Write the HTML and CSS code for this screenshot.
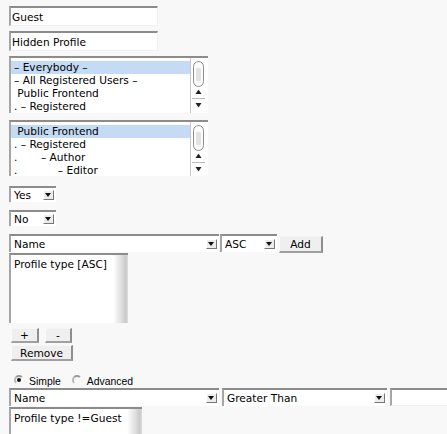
FILE: index.html
```html
<!DOCTYPE html>
<html lang="en">
<head>
    <meta charset="UTF-8">
    <title>Profile</title>
    <link rel="stylesheet" href="styles.css">
</head>
<body>
    <div class="form">
        <input class="field" type="text" value="Guest">
        <input class="field field-two" type="text" value="Hidden Profile">

        <div class="listbox lb-one">
            <div class="opts">
                <div class="opt sel">– Everybody –</div>
                <div class="opt">– All Registered Users –</div>
                <div class="opt">&nbsp;Public Frontend</div>
                <div class="opt">. – Registered</div>
            </div>
            <div class="vscroll">
                <svg width="14" height="52" viewBox="0 0 14 52">
                    <rect x="2.5" y="2.5" width="10" height="25" rx="5" fill="#fbfbfb" stroke="#8e8e8e"/>
                    <path d="M5 10 Q7.5 7 10 10 L10 21 Q7.5 24 5 21 Z" fill="#e2e2e2"/>
                    <path d="M7.5 30.5 L10.5 35 L4.5 35 Z" fill="#222"/>
                    <line x1="1" y1="39.5" x2="14" y2="39.5" stroke="#bbb"/>
                    <path d="M4.5 44 L10.5 44 L7.5 48.5 Z" fill="#222"/>
                </svg>
            </div>
        </div>

        <div class="listbox lb-two">
            <div class="opts">
                <div class="opt sel">&nbsp;Public Frontend</div>
                <div class="opt">. – Registered</div>
                <div class="opt">.&nbsp;&nbsp;&nbsp;&nbsp;&nbsp;&nbsp; – Author</div>
                <div class="opt">.&nbsp;&nbsp;&nbsp;&nbsp;&nbsp;&nbsp;&nbsp;&nbsp;&nbsp;&nbsp;&nbsp; – Editor</div>
            </div>
            <div class="vscroll">
                <svg width="14" height="52" viewBox="0 0 14 52">
                    <rect x="2.5" y="2.5" width="10" height="25" rx="5" fill="#fbfbfb" stroke="#8e8e8e"/>
                    <path d="M5 10 Q7.5 7 10 10 L10 21 Q7.5 24 5 21 Z" fill="#e2e2e2"/>
                    <path d="M7.5 30.5 L10.5 35 L4.5 35 Z" fill="#222"/>
                    <line x1="1" y1="39.5" x2="14" y2="39.5" stroke="#bbb"/>
                    <path d="M4.5 44 L10.5 44 L7.5 48.5 Z" fill="#222"/>
                </svg>
            </div>
        </div>

        <div class="dropdown small yes"><span class="val">Yes</span><span class="arrow"></span></div>
        <div class="dropdown small no"><span class="val">No</span><span class="arrow"></span></div>

        <div class="row sort-row">
            <div class="dropdown name"><span class="val">Name</span><span class="arrow"></span></div>
            <div class="dropdown asc"><span class="val">ASC</span><span class="arrow"></span></div>
            <button class="btn add">Add</button>
        </div>
        <div class="box box-one">
            <div class="box-text">Profile type [ASC]</div>
            <div class="shade"></div>
        </div>

        <div class="row btn-row">
            <button class="btn plus">+</button>
            <button class="btn minus">-</button>
        </div>
        <button class="btn remove">Remove</button>

        <div class="radios">
            <span class="radio on"></span><span class="rlabel">Simple</span>
            <span class="radio"></span><span class="rlabel">Advanced</span>
        </div>

        <div class="row filter-row">
            <div class="dropdown name"><span class="val">Name</span><span class="arrow"></span></div>
            <div class="dropdown cond"><span class="val">Greater Than</span><span class="arrow"></span></div>
            <input class="field value" type="text" value="">
        </div>
        <div class="box box-two">
            <div class="box-text">Profile type !=Guest</div>
            <div class="shade"></div>
        </div>
    </div>
</body>
</html>
```

FILE: styles.css
```css
body { margin: 0; background: #f8f8f8; color: #000; font-family: "DejaVu Sans", sans-serif; font-size: 10.6px; overflow: hidden; }
.form { display: flex; flex-direction: column; align-items: flex-start; padding: 6px 0 0 9px; }

.field { box-sizing: border-box; width: 149px; height: 20px; margin: 0; padding: 1px 0 0 1px; background: #fff; font: inherit; color: #000; border-top: 2px solid #8c8c8c; border-left: 2px solid #a6a6a6; border-right: 1px solid #f2f2f2; border-bottom: 1px solid #f0f0f0; outline: none; }
.field-two { margin-top: 5px; }

.listbox { box-sizing: border-box; display: flex; width: 199px; height: 57px; background: #fff; border-top: 2px solid #8c8c8c; border-left: 2px solid #a6a6a6; }
.lb-one { margin-top: 5px; }
.lb-two { margin-top: 7px; height: 56px; }
.opts { flex: 1; padding-top: 3px; }
.opt { height: 13px; line-height: 13px; padding-left: 3px; white-space: nowrap; }
.opt.sel { background: #c5dbf5; }
.vscroll { width: 14px; margin-right: 3px; padding-top: 1px; border-left: 1px solid #c8c8c8; }
.vscroll svg { display: block; }

.dropdown { box-sizing: border-box; display: flex; align-items: center; height: 16px; background: #fff; border-top: 2px solid #8c8c8c; border-left: 2px solid #a6a6a6; padding-right: 2px; }
.dropdown .val { flex: 1; padding-left: 3px; white-space: nowrap; line-height: 13px; }
.dropdown .arrow { position: relative; width: 11px; height: 10px; box-sizing: border-box; background: #ececec; border-right: 1px solid #777; border-bottom: 1px solid #777; border-top: 1px solid #fff; border-left: 1px solid #fff; }
.dropdown .arrow::after { content: ""; position: absolute; left: 1px; top: 2px; border-left: 3.5px solid transparent; border-right: 3.5px solid transparent; border-top: 4px solid #111; }
.small { width: 47px; }
.yes { margin-top: 10px; }
.no { margin-top: 8px; }

.row { display: flex; align-items: flex-start; }
.sort-row { margin-top: 8px; }
.name { width: 210px; height: 18px; }
.asc { width: 57px; height: 18px; margin-left: 1px; }
.cond { width: 165px; height: 18px; margin-left: 3px; }

.btn { box-sizing: border-box; margin: 0; padding: 0; height: 16px; font: inherit; color: #000; background: #efefef; border-top: 1px solid #f6f6f6; border-left: 1px solid #fafafa; border-right: 2px solid #8e8e8e; border-bottom: 2px solid #a0a0a0; line-height: 12px; }
.add { width: 44px; margin: 2px 0 0 2px; height: 17px; }

.box { box-sizing: border-box; display: flex; height: 70px; background: #fff; border-top: 2px solid #8c8c8c; border-left: 2px solid #a6a6a6; }
.box-one { width: 119px; }
.box-two { width: 133px; height: 40px; }
.box-text { flex: 1; padding: 3px 0 0 3px; white-space: nowrap; }
.shade { width: 14px; background: linear-gradient(to right, #fbfbfb, #e0e0e0 50%, #c9c9c9 85%, #dedede); }

.btn-row { margin-top: 5px; margin-left: 2px; }
.plus { width: 28px; height: 15px; }
.minus { width: 27px; height: 15px; margin-left: 6px; }
.remove { width: 62px; height: 16px; margin: 2px 0 0 2px; }

.radios { display: flex; align-items: flex-end; margin-top: 13px; height: 14px; font-family: "Liberation Sans", sans-serif; font-size: 10.4px; }
.radio { position: relative; width: 10px; height: 10px; margin: 0 5px 3px 5px; border-radius: 50%; border-top: 2px solid #9a9a9a; border-left: 2px solid #b8b8b8; border-right: 2px solid transparent; border-bottom: 2px solid transparent; box-sizing: border-box; }
.radio.on::after { content: ""; position: absolute; left: 1px; top: 1px; width: 4px; height: 4px; border-radius: 50%; background: #111; }
.rlabel { line-height: 12px; margin-right: 6px; }

.value { width: 60px; height: 18px; margin-left: 3px; }
.box-two { margin-top: 1px; }
```
